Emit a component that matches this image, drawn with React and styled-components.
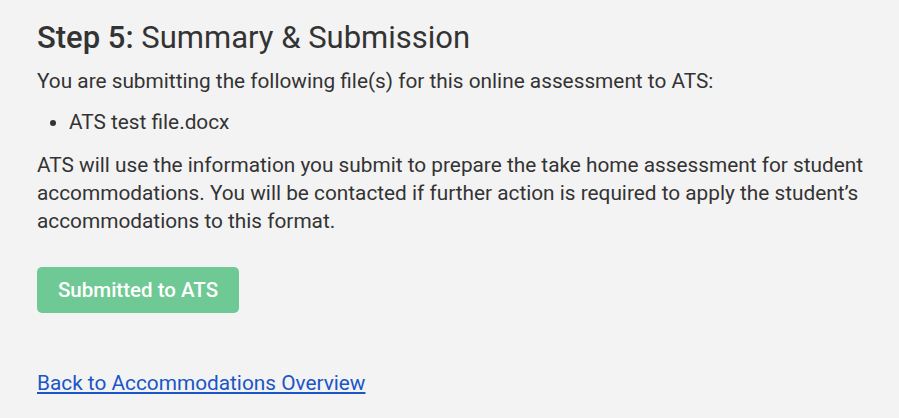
import React from "react";
import styled, { createGlobalStyle } from "styled-components";

const Global = createGlobalStyle`
  html, body { margin: 0; padding: 0; background: #f3f3f3; }
  body { font-family: Roboto, "Liberation Sans", sans-serif; color: #333333; }
`;

const Page = styled.main`
  padding: 20px 20px 0 37px;
  min-height: 418px;
  box-sizing: border-box;
`;

const Title = styled.h2`
  margin: 0;
  font-size: 31px;
  line-height: 36px;
  font-weight: 400;
  color: #333333;
  strong { font-weight: 500; }
`;

const Text = styled.p`
  margin: ${p => p.$top || 0}px 0 0 0;
  font-size: 20.8px;
  line-height: 28px;
  color: #333333;
`;

const List = styled.ul`
  margin: 13px 0 0 0;
  padding-left: 32px;
  font-size: 20.8px;
  line-height: 28px;
`;

const Button = styled.button`
  margin-top: 32px;
  width: 202px;
  height: 46px;
  padding: 0;
  border: none;
  border-radius: 5px;
  background: #6fc994;
  color: #ffffff;
  font-family: Roboto, "Liberation Sans", sans-serif;
  font-size: 20.5px;
  font-weight: 500;
  cursor: default;
`;

const Back = styled.a`
  display: inline-block;
  margin-top: 56px;
  font-size: 20.8px;
  line-height: 28px;
  color: #1a56c6;
  text-decoration: underline;
`;

export default function App() {
  return (
    <>
      <Global />
      <Page>
        <Title><strong>Step 5:</strong> Summary &amp; Submission</Title>
        <Text $top={11}>You are submitting the following file(s) for this online assessment to ATS:</Text>
        <List><li>ATS test file.docx</li></List>
        <Text $top={15}>
          ATS will use the information you submit to prepare the take home assessment for student accommodations. You will be contacted if further action is required to apply the student’s accommodations to this format.
        </Text>
        <div><Button>Submitted to ATS</Button></div>
        <Back href="#">Back to Accommodations Overview</Back>
      </Page>
    </>
  );
}
